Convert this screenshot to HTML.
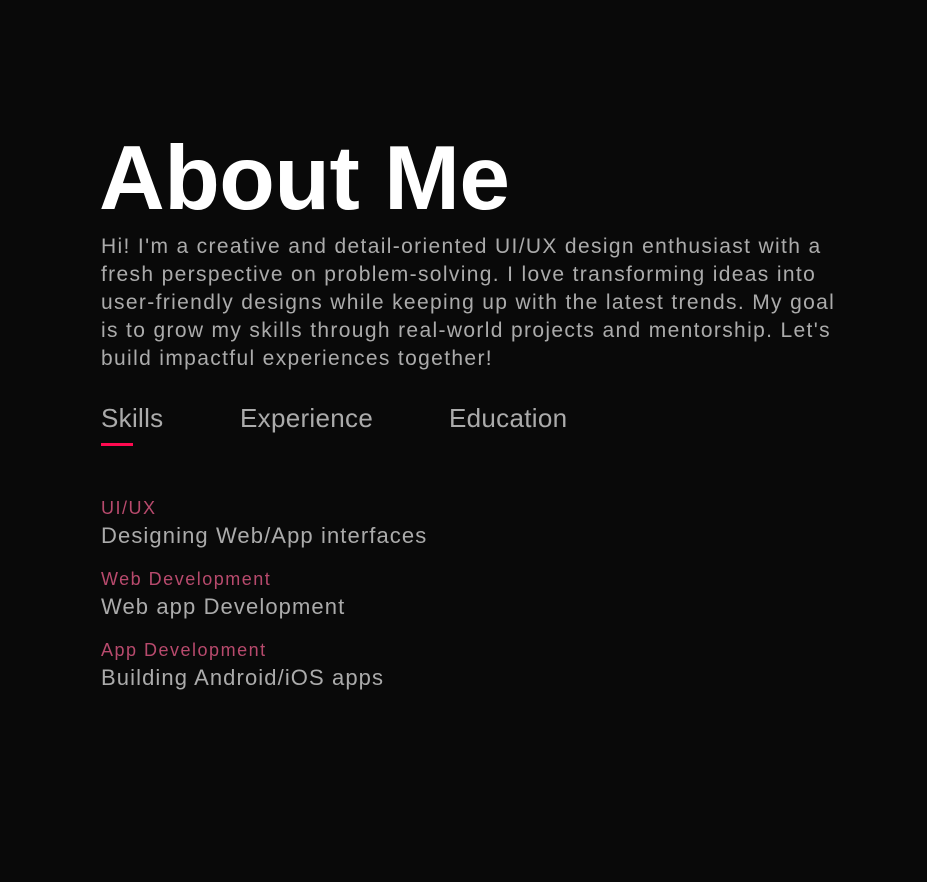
<!DOCTYPE html>
<html><head><meta charset="utf-8">
<style>
html,body{margin:0;padding:0;background:#090909;width:927px;height:882px;overflow:hidden;font-family:"Liberation Sans",Arial,sans-serif}
.a{position:absolute;white-space:nowrap}
h1{position:absolute;left:99px;top:124px;margin:0;font-size:91px;font-weight:bold;color:#fff;letter-spacing:-0.5px;line-height:110px}
.p{position:absolute;left:101px;top:233px;margin:0;font-size:21px;line-height:28px;color:#ababab;letter-spacing:1.35px;white-space:nowrap}
.tab{font-size:26px;color:#ababab;top:403px;letter-spacing:0.3px}
.bar{position:absolute;left:101px;top:443px;width:32px;height:3px;background:#ff0a50}
.lab{font-size:18px;color:#b84a6d;left:101px;letter-spacing:1.5px}
.desc{font-size:22px;color:#ababab;left:101px;letter-spacing:1.1px}
</style></head><body>
<h1>About Me</h1>
<div class="p">Hi! I'm a creative and detail-oriented UI/UX design enthusiast with a<br>fresh perspective on problem-solving. I love transforming ideas into<br>user-friendly designs while keeping up with the latest trends. My goal<br>is to grow my skills through real-world projects and mentorship. Let's<br>build impactful experiences together!</div>
<div class="a tab" style="left:101px">Skills</div>
<div class="a tab" style="left:240px">Experience</div>
<div class="a tab" style="left:449px">Education</div>
<div class="bar"></div>
<div class="a lab" style="top:498px">UI/UX</div>
<div class="a desc" style="top:523px">Designing Web/App interfaces</div>
<div class="a lab" style="top:569px">Web Development</div>
<div class="a desc" style="top:594px">Web app Development</div>
<div class="a lab" style="top:640px">App Development</div>
<div class="a desc" style="top:665px">Building Android/iOS apps</div>
</body></html>
